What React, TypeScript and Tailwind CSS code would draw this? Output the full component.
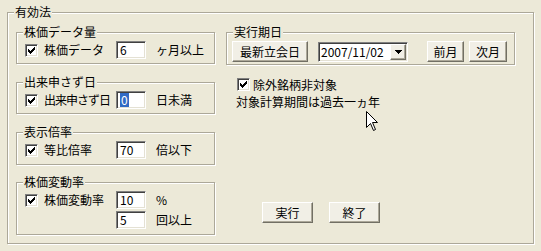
import React from "react";

const sunken =
  "border border-t-[#808080] border-l-[#808080] border-r-white border-b-white shadow-[inset_1px_1px_0_#404040,inset_-1px_-1px_0_#E4E1D4]";
const raised =
  "border border-t-white border-l-white border-r-[#716F64] border-b-[#716F64] shadow-[inset_-1px_-1px_0_#ACA899] bg-[#F1EFE6]";

function Group({
  title,
  className,
  children,
}: {
  title: string;
  className: string;
  children?: React.ReactNode;
}) {
  return (
    <div
      className={`border border-[#ACA899] shadow-[inset_1px_1px_0_#ffffff,1px_1px_0_#ffffff] ${className}`}
    >
      <div className="-mt-[8px] ml-[6px] px-[1px] w-fit bg-[#ECE9D8] leading-[14px] whitespace-nowrap">
        {title}
      </div>
      {children}
    </div>
  );
}

function Check() {
  return (
    <span
      className={`w-[13px] h-[13px] bg-white flex items-center justify-center shrink-0 ${sunken}`}
    >
      <svg width="7" height="7" viewBox="0 0 7 7" shapeRendering="crispEdges">
        <path
          d="M6 0h1v3h-1z M5 1h1v3h-1z M4 2h1v3h-1z M3 3h1v3h-1z M2 4h1v3h-1z M1 3h1v3h-1z M0 2h1v3h-1z"
          fill="#000"
        />
      </svg>
    </span>
  );
}

function Field({ children }: { children?: React.ReactNode }) {
  return (
    <div
      className={`w-[30px] h-[18px] bg-white flex items-center pl-[3px] shrink-0 ${sunken}`}
    >
      {children}
    </div>
  );
}

function Row({
  label,
  value,
  unit,
  selected,
  tight,
}: {
  label: string;
  value: string;
  unit: string;
  selected?: boolean;
  tight?: boolean;
}) {
  return (
    <div className="flex items-center mt-[2px] h-[18px] pl-[8px]">
      <Check />
      <span
        className={`ml-[6px] w-[72px] whitespace-nowrap ${tight ? "tracking-[-1px]" : ""}`}
      >
        {label}
      </span>
      <Field>
        {selected ? (
          <span className="bg-[#316AC5] text-white px-[1px]">{value}</span>
        ) : (
          value
        )}
      </Field>
      <span className="ml-[10px] whitespace-nowrap">{unit}</span>
    </div>
  );
}

function Btn({
  className,
  children,
}: {
  className: string;
  children: React.ReactNode;
}) {
  return (
    <div
      className={`h-[21px] flex items-center justify-center shrink-0 whitespace-nowrap ${raised} ${className}`}
    >
      {children}
    </div>
  );
}

export default function App() {
  return (
    <div className="relative w-[541px] h-[251px] overflow-hidden bg-[#ECE9D8] pt-[12px] pl-[7px] font-['Noto_Sans_CJK_JP','Liberation_Sans',sans-serif] text-[12px] leading-[14px] text-black">
      <Group title="有効法" className="w-[527px] h-[232px] flex flex-col">
        <div className="flex mt-[13px] pl-[8px] gap-[11px]">
          {/* left column */}
          <div className="flex flex-col w-[199px]">
            <Group title="株価データ量" className="h-[32px]">
              <Row label="株価データ" value="6" unit="ヶ月以上" />
            </Group>
            <Group title="出来申さず日" className="h-[32px] mt-[18px]">
              <Row label="出来申さず日" value="0" unit="日未満" selected tight />
            </Group>
            <Group title="表示倍率" className="h-[33px] mt-[18px]">
              <Row label="等比倍率" value="70" unit="倍以下" />
            </Group>
            <Group title="株価変動率" className="h-[53px] mt-[17px]">
              <Row label="株価変動率" value="10" unit="%" />
              <div className="flex items-center mt-[2px] h-[18px] pl-[99px]">
                <Field>5</Field>
                <span className="ml-[10px] whitespace-nowrap">回以上</span>
              </div>
            </Group>
          </div>

          {/* right column */}
          <div className="flex flex-col w-[289px]">
            <Group title="実行期日" className="h-[33px]">
              <div className="flex items-center mt-[2px] h-[21px] pl-[5px]">
                <Btn className="w-[76px]">最新立会日</Btn>
                <div
                  className={`ml-[10px] w-[90px] h-[20px] bg-white flex items-center ${sunken}`}
                >
                  <span className="flex-1 pl-[2px] whitespace-nowrap">2007/11/02</span>
                  <div
                    className={`w-[16px] h-[16px] mr-[1px] flex items-center justify-center ${raised}`}
                  >
                    <svg width="7" height="4" viewBox="0 0 7 4" shapeRendering="crispEdges">
                      <path d="M0 0h7v1h-7z M1 1h5v1h-5z M2 2h3v1h-3z M3 3h1v1h-1z" fill="#000" />
                    </svg>
                  </div>
                </div>
                <Btn className="ml-[19px] w-[37px]">前月</Btn>
                <Btn className="ml-[5px] w-[38px]">次月</Btn>
              </div>
            </Group>

            <div className="flex items-center mt-[13px] h-[13px] pl-[11px]">
              <Check />
              <span className="ml-[3px] whitespace-nowrap">除外銘柄非対象</span>
            </div>
            <div className="mt-[4px] pl-[10px] whitespace-nowrap">対象計算期間は過去一ヵ年</div>

            <div className="flex mt-[93px] pl-[36px] gap-[16px]">
              <Btn className="w-[51px]">実行</Btn>
              <Btn className="w-[51px]">終了</Btn>
            </div>
          </div>
        </div>
      </Group>

      {/* mouse cursor */}
      <svg
        className="absolute left-[366px] top-[111px]"
        width="13"
        height="21"
        viewBox="0 0 13 21"
      >
        <path
          d="M0.5 0.5 L0.5 16.5 L4.5 12.5 L7.5 19.5 L9.5 18.5 L6.5 11.5 L11.5 11.5 Z"
          fill="#fff"
          stroke="#000"
          strokeWidth="1"
          strokeLinejoin="miter"
        />
      </svg>
    </div>
  );
}
